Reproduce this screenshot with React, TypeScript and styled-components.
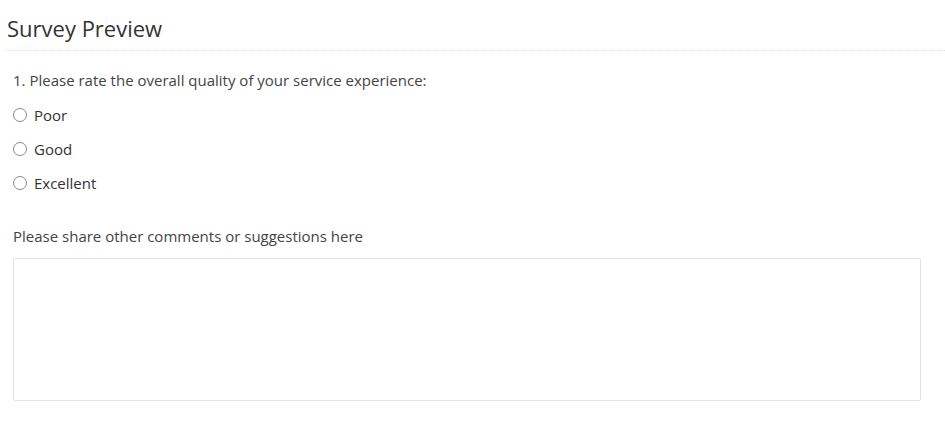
import React from 'react';
import styled, { createGlobalStyle } from 'styled-components';

const GlobalStyle = createGlobalStyle`
  body {
    margin: 0;
    background: #fff;
    font-family: "Open Sans", "Liberation Sans", sans-serif;
    color: #333;
  }
`;

const Page = styled.div`
  padding: 0 0 0 6px;
`;

const Title = styled.h1`
  margin: 0;
  padding: 15px 0 8px 1px;
  font-size: 22px;
  font-weight: 400;
  line-height: 27px;
  color: #333;
  border-bottom: 1px dotted #ddd;
`;

const Body = styled.div`
  padding: 19px 24px 0 7px;
`;

const Question = styled.div`
  font-size: 15px;
  line-height: 20px;
  color: #444;
  margin-bottom: 8px;
`;

const Options = styled.div`
  display: flex;
  flex-direction: column;
`;

const Option = styled.label`
  display: flex;
  align-items: center;
  height: 34px;
  font-size: 15px;
  color: #333;
`;

const Radio = styled.span`
  width: 14px;
  height: 14px;
  border: 1px solid #888;
  border-radius: 50%;
  box-sizing: border-box;
  margin: 0 7px 0 0;
  background: #fff;
`;

const CommentLabel = styled.div`
  font-size: 15px;
  line-height: 20px;
  color: #444;
  margin: 26px 0 12px;
`;

const TextArea = styled.div`
  height: 143px;
  border: 1px solid #e2e2e2;
  border-radius: 2px;
  box-sizing: border-box;
`;

const options = ['Poor', 'Good', 'Excellent'];

export default function App() {
  return (
    <>
      <GlobalStyle />
      <Page>
        <Title>Survey Preview</Title>
        <Body>
          <Question>1. Please rate the overall quality of your service experience:</Question>
          <Options>
            {options.map((o) => (
              <Option key={o}>
                <Radio />
                {o}
              </Option>
            ))}
          </Options>
          <CommentLabel>Please share other comments or suggestions here</CommentLabel>
          <TextArea />
        </Body>
      </Page>
    </>
  );
}
